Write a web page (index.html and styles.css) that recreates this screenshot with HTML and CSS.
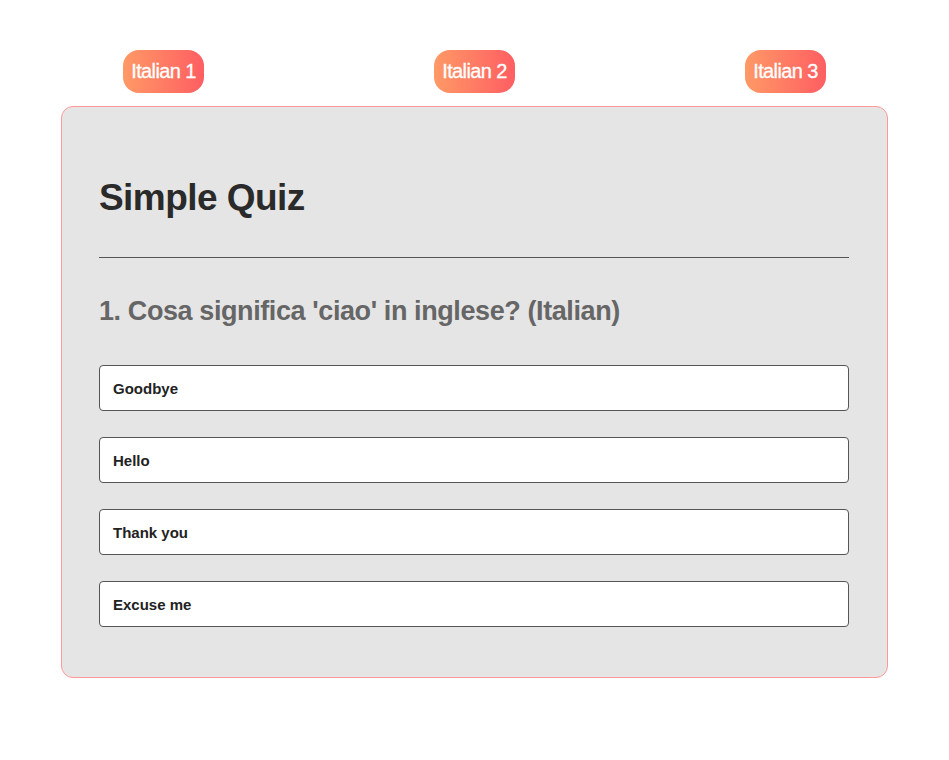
FILE: index.html
```html
<!DOCTYPE html>
<html>
<head>
<meta charset="utf-8">
<link rel="stylesheet" href="styles.css">
</head>
<body>
<div class="tabs">
  <button class="tab">Italian 1</button>
  <button class="tab">Italian 2</button>
  <button class="tab">Italian 3</button>
</div>
<div class="card">
  <h1 class="title">Simple Quiz</h1>
  <hr class="rule">
  <h2 class="question">1. Cosa significa 'ciao' in inglese? (Italian)</h2>
  <div class="options">
    <div class="option">Goodbye</div>
    <div class="option">Hello</div>
    <div class="option">Thank you</div>
    <div class="option">Excuse me</div>
  </div>
</div>
</body>
</html>
```
FILE: styles.css
```css
body {
  margin: 8px;
  background: #ffffff;
  font-family: "Liberation Sans", Arial, sans-serif;
}
.tabs {
  display: flex;
  justify-content: space-around;
  margin-top: 42px;
  padding: 0 0 0 0;
}
.tab {
  height: 43px;
  padding: 0 8px;
  border: none;
  border-radius: 16px;
  background: linear-gradient(90deg, #ff9966, #ff5e62);
  color: #ffffff;
  font-family: "Liberation Sans", Arial, sans-serif;
  font-size: 20px;
  letter-spacing: -0.03em;
  -webkit-text-stroke: 0.3px #ffffff;
}
.card {
  width: 750px;
  margin: 13px auto 0;
  padding: 37px 38px 50px 37px;
  background: #e5e5e5;
  border: 1px solid #ff9999;
  border-radius: 12px;
}
.title {
  margin: 32px 0 0;
  font-size: 37px;
  line-height: 44px;
  font-weight: bold;
  color: #2a2a2a;
  letter-spacing: -0.015em;
}
.rule {
  margin: 37px 0 0;
  border: none;
  border-top: 1px solid #555555;
}
.question {
  margin: 36px 0 0;
  font-size: 27px;
  line-height: 34px;
  font-weight: bold;
  color: #666666;
  letter-spacing: -0.015em;
}
.options {
  display: flex;
  flex-direction: column;
  gap: 26px;
  margin-top: 37px;
}
.option {
  height: 44px;
  display: flex;
  align-items: center;
  padding-left: 13px;
  background: #ffffff;
  border: 1px solid #555555;
  border-radius: 4px;
  font-size: 15px;
  font-weight: bold;
  color: #222222;
  letter-spacing: 0;
}
```
